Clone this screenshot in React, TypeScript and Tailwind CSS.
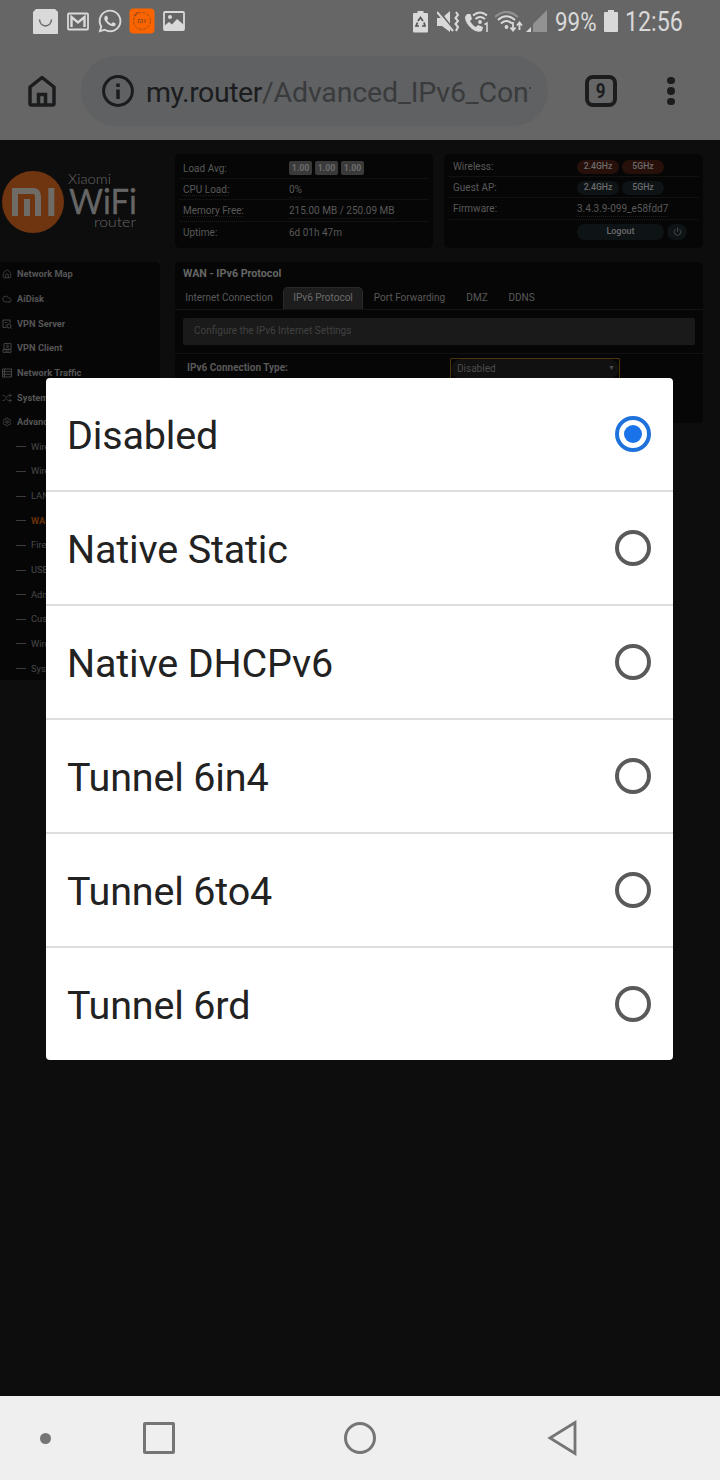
import { useState, type ReactNode } from "react";
import { Cloud, House, Power, Settings, Shuffle } from "lucide-react";
import { FaWhatsapp } from "react-icons/fa";

const connectionTypes = [
  "Disabled",
  "Native Static",
  "Native DHCPv6",
  "Tunnel 6in4",
  "Tunnel 6to4",
  "Tunnel 6rd",
];

type IconProps = { className?: string; strokeWidth?: number };

const ServerIcon = ({ className }: IconProps) => (
  <svg className={className} viewBox="0 0 10 10" fill="none" stroke="currentColor">
    <path d="M4.500 8.500H1V1H8V4" />
    <circle cx="7" cy="7" r="2" />
    <path d="M3 3.500H5.500M3 6H4M8.500 8.500L9.800 9.800" strokeWidth="0.800" />
  </svg>
);

const ClientIcon = ({ className }: IconProps) => (
  <svg className={className} viewBox="0 0 10 10" fill="none" stroke="currentColor">
    <path d="M2 6V0.600H9V6M1 6.500H9V9.300H1Z" />
    <circle cx="5.500" cy="3" r="1" strokeWidth="0.800" />
    <path d="M3.500 5.500Q5.500 3.500 7.500 5.500M3 8H7" strokeWidth="0.800" />
  </svg>
);

const TrafficIcon = ({ className }: IconProps) => (
  <svg className={className} viewBox="0 0 10 10" fill="none" stroke="currentColor">
    <path d="M0.500 1H9.500V9H0.500ZM0.500 3.700H9.500M0.500 6.300H9.500M2.500 1V9" />
  </svg>
);

const menuItems = [
  { label: "Network Map", Icon: House },
  { label: "AiDisk", Icon: Cloud },
  { label: "VPN Server", Icon: ServerIcon },
  { label: "VPN Client", Icon: ClientIcon },
  { label: "Network Traffic", Icon: TrafficIcon },
  { label: "System", Icon: Shuffle },
  { label: "Advanced", Icon: Settings },
];

const subMenuItems = [
  "Wireless",
  "Wireless",
  "LAN",
  "WAN",
  "Firewall",
  "USB",
  "Administration",
  "Customization",
  "Wireless",
  "System",
];

const tabs = [
  { label: "Internet Connection", width: "w-[108px]" },
  { label: "IPv6 Protocol", width: "w-[80px]" },
  { label: "Port Forwarding", width: "w-[93px]" },
  { label: "DMZ", width: "w-[42px]" },
  { label: "DDNS", width: "w-[47px]" },
];

const StatusBar = () => (
  <div className="flex h-11 items-center pl-[33px] text-[#d9d9d9]">
    <div className="flex w-[380px] items-center">
      {/* Store bag */}
      <svg width="25" height="26" viewBox="0 0 25 26">
        <path d="M3 0H22L25 3V24Q25 25 24 25H1Q0 25 0 24V3Z" fill="#d9d9d9" />
        <path
          d="M6.500 10.500C7 19 18 19 18.500 10.500"
          fill="none"
          stroke="#666"
          strokeWidth="1.500"
        />
      </svg>
      {/* Mail */}
      <svg className="mb-[2px] ml-[9px]" width="22" height="19" viewBox="0 0 22 19">
        <rect x="1" y="1.500" width="20" height="16" rx="1" fill="none" stroke="#d9d9d9" strokeWidth="1.800" />
        <path d="M4.500 15V5L11 10.500L17.500 5V15" fill="none" stroke="#d9d9d9" strokeWidth="2.400" />
      </svg>
      <FaWhatsapp className="mb-[2px] ml-2 size-[26px]" />
      {/* Mi store */}
      <svg className="mb-[2px] ml-[6px]" width="26" height="26" viewBox="0 0 26 26">
        <rect x="0.500" y="0.500" width="25" height="25" rx="4" fill="#fa6400" />
        <circle cx="13" cy="13" r="8.500" fill="none" stroke="#a34d19" strokeWidth="1" strokeDasharray="3 1.500" />
        <path d="M9.500 15V11.500H13.500V15M11.500 15V13M16 11V15" fill="none" stroke="#a34d19" strokeWidth="1.200" />
        <path d="M5 8L9 4" stroke="#a34d19" strokeWidth="1.500" />
      </svg>
      {/* Picture */}
      <svg className="mb-[2px] ml-2" width="22" height="20" viewBox="0 0 22 20">
        <rect x="1" y="1" width="20" height="18" rx="1" fill="none" stroke="#d9d9d9" strokeWidth="1.800" />
        <circle cx="7" cy="6" r="2" fill="#d9d9d9" />
        <path d="M1 15L6 11L9 13.500L14 8L21 14V19H1Z" fill="#d9d9d9" />
      </svg>
    </div>
    <div className="flex items-center">
      {/* Battery saver */}
      <svg width="15" height="22" viewBox="0 0 15 22" fill="#d9d9d9">
        <path d="M4.500 0H10.500V2H14Q15 2 15 3V20.500Q15 21.500 14 21.500H1Q0 21.500 0 20.500V3Q0 2 1 2H4.500Z" />
        <path d="M5 10L7.500 6.500L10 10M11 11.500L12 15H9M6 15H3L4.500 11.500" fill="none" stroke="#555" strokeWidth="1.700" />
      </svg>
      {/* Muted with vibration */}
      <svg className="ml-[9px]" width="23" height="22" viewBox="0 0 23 22">
        <path d="M0 7H5L13 0V21L5 15H0Z" fill="#d9d9d9" />
        <path d="M2 0L16 18" stroke="#666" strokeWidth="2" />
        <path d="M0 1L16 20" stroke="#d9d9d9" strokeWidth="2" />
        <path d="M19 1L21 4L18.500 7L21 10L18.500 13L21 16L19 20" fill="none" stroke="#d9d9d9" strokeWidth="2" />
      </svg>
      {/* Wi-Fi calling */}
      <svg className="ml-[5px]" width="25" height="22" viewBox="0 0 25 22">
        <path d="M2 3L5.500 3L7 8L5 10Q8 15 11 16L13 14L18 16L17 20Q12 22 7 18Q0 12 0 6Z" fill="#d9d9d9" />
        <path d="M8 4.500Q15 -1.500 22 4.500M10.500 8Q15 4 20 8" fill="none" stroke="#d9d9d9" strokeWidth="2" />
        <circle cx="15" cy="11" r="1.900" fill="#d9d9d9" />
        <path d="M19.500 13.500L22 12V21" fill="none" stroke="#d9d9d9" strokeWidth="1.500" />
      </svg>
      {/* Wi-Fi */}
      <svg className="ml-[5px]" width="29" height="22" viewBox="0 0 29 22" fill="none" strokeWidth="2.100">
        <path d="M0 6Q11 -4 23 6" stroke="#929292" />
        <path d="M3 9Q11 1.500 20 9M6 12.500Q11 7.500 17 12.500" stroke="#d9d9d9" />
        <circle cx="11.500" cy="16" r="1.900" fill="#d9d9d9" />
        <path d="M18 11V19M15.500 16.500L18 19.500L20.500 16.500M24.500 19V12M22 14.500L24.500 11.500L27 14.500" stroke="#d9d9d9" strokeWidth="1.800" />
      </svg>
      {/* Signal */}
      <svg className="mb-[2px] ml-[2px]" width="21" height="23" viewBox="0 0 21 23">
        <path d="M21 0V22H7V14Z" fill="#929292" />
        <path d="M0 22L5 17V22Z" fill="#d9d9d9" />
      </svg>
      <span className="ml-2 w-[42px] origin-left scale-x-[0.860] text-[26px] leading-none">99%</span>
      <svg className="mb-[2px] ml-[7px]" width="14" height="22" viewBox="0 0 14 22">
        <path d="M4 0H10V2H13Q14 2 14 3V21Q14 22 13 22H1Q0 22 0 21V3Q0 2 1 2H4Z" fill="#d9d9d9" />
      </svg>
      <span className="ml-[7px] origin-left scale-x-[0.860] text-[27px] leading-none">12:56</span>
    </div>
  </div>
);

const AddressBar = () => (
  <div className="flex h-24 items-center pb-[2px] pl-[27px] text-[#1b1c1e]">
    <svg width="30" height="32" viewBox="0 0 30 32" fill="none" stroke="#1b1c1e" strokeWidth="3.500">
      <path d="M3 12L15 2.500L27 12V28.500Q27 30 25.500 30H4.500Q3 30 3 28.500Z" strokeLinejoin="round" />
      <path d="M11.500 30V19.500H18.500V30" />
    </svg>
    <div className="ml-6 flex h-[70px] w-[467px] items-center rounded-full bg-[#5f6163] pl-[21px]">
      <svg width="32" height="32" viewBox="0 0 32 32" fill="none" stroke="#1b1c1e">
        <circle cx="16" cy="16" r="14.400" strokeWidth="3" />
        <path d="M16 8.500V12M16 14.500V24" strokeWidth="3.500" />
      </svg>
      <div className="ml-3 w-[385px] overflow-hidden pt-[3px] text-[28.500px] leading-10 tracking-[-0.450px] whitespace-nowrap">
        my.router<span className="tracking-[-0.150px] text-[#3a3b3c]">/Advanced_IPv6_Conf</span>
      </div>
    </div>
    <div className="ml-[37px] flex size-8 items-center justify-center rounded-[8px] border-4 border-[#1b1c1e] text-xl font-bold">
      <span className="scale-x-[0.850]">9</span>
    </div>
    <div className="ml-[50px] flex flex-col gap-[3px]">
      <span className="size-[7.500px] rounded-full bg-[#1b1c1e]" />
      <span className="size-[7.500px] rounded-full bg-[#1b1c1e]" />
      <span className="size-[7.500px] rounded-full bg-[#1b1c1e]" />
    </div>
  </div>
);

const RouterLogo = () => (
  <svg className="mt-[30px] block" width="140" height="66" viewBox="0 0 140 66">
    <circle cx="33" cy="32" r="31" fill="#6e3510" />
    <path d="M15 46V21H33Q38 21 38 27V46M27 46V29M51.300 18V46" fill="none" stroke="#6f6b66" strokeWidth="6" />
    <g fill="#666" fontFamily="Lato, sans-serif">
      <text x="68" y="14" fontSize="14" fontWeight="300" textLength="43" lengthAdjust="spacingAndGlyphs">Xiaomi</text>
      <text
        x="69"
        y="44"
        fontSize="34"
        textLength="68"
        lengthAdjust="spacingAndGlyphs"
        stroke="#666"
        strokeWidth="0.300"
        strokeLinejoin="round">
        WiFi
      </text>
      <text x="94" y="57" fontSize="14" fontWeight="300" textLength="42" lengthAdjust="spacingAndGlyphs">router</text>
    </g>
  </svg>
);

const dotted = "border-b border-dotted border-[#1e1e1e]";

const InfoRow = ({ label, children, last }: { label: ReactNode; children?: ReactNode; last?: boolean }) => (
  <div className={`flex h-[21.200px] items-center pl-1 ${last ? "" : "border-b border-[#111]"}`}>
    <span className="shrink-0 grow-0 basis-[106px]">{label}</span>
    {children}
  </div>
);

const Pill = ({ text, active }: { text: string; active?: boolean }) => (
  <span
    className={`mr-[3px] flex h-[14px] w-[42px] items-center justify-center rounded-full text-[8.700px] font-medium text-[#6c6c6c] ${
      active ? "bg-[#27100a]" : "bg-[#0e1315]"
    }`}>
    {text}
  </span>
);

const Sidebar = () => (
  <div className="h-[418px] w-40 rounded-r-[5px] bg-[#060606]">
    {menuItems.map(({ label, Icon }) => (
      <div key={label} className="flex h-[24.650px] items-center pl-[2px] text-[9.300px] font-bold text-[#555]">
        <Icon className="mr-[5px] size-[10px] text-[#444]" strokeWidth={2} />
        {label}
      </div>
    ))}
    {subMenuItems.map((label, index) => (
      <div
        key={index}
        className={`flex h-[24.650px] items-center pl-4 text-[9.300px] ${
          label === "WAN" ? "font-bold text-[#663009]" : "text-[#494949]"
        }`}>
        <span className="mr-[5px] h-px w-[10px] bg-[#3c3c3c]" />
        {label}
      </div>
    ))}
  </div>
);

const RouterPage = () => (
  <div className="h-[1256px] bg-[#0d0d0d] text-[10px] text-[#595959]">
    <div className="flex h-[122px]">
      <div className="w-[175px]">
        <RouterLogo />
      </div>
      <div className="mt-[14px] h-[94px] w-[258px] rounded-[5px] bg-[#060606] px-1 pt-1">
        <InfoRow label="Load Avg:">
          <div className="flex gap-[3px] text-[8.700px] font-bold text-[#6c6c6c]">
            {[0, 1, 2].map((i) => (
              <span key={i} className="flex h-[14px] w-[23px] items-center justify-center rounded-[2px] bg-[#3a3a3a]">
                1.00
              </span>
            ))}
          </div>
        </InfoRow>
        <InfoRow label={<span className={dotted}>CPU Load:</span>}>
          <span className={`mt-px ${dotted}`}>0%</span>
        </InfoRow>
        <InfoRow label={<span className={dotted}>Memory Free:</span>}>
          <span className={`mt-[2px] ${dotted}`}>215.00 MB / 250.09 MB</span>
        </InfoRow>
        <InfoRow label="Uptime:" last>6d 01h 47m</InfoRow>
      </div>
      <div className="mt-[14px] ml-[11px] h-[94px] w-[259px] rounded-[5px] bg-[#060606] pt-[2px] pr-1 pl-[5px]">
        <InfoRow label="Wireless:">
          <div className="ml-[18px] flex pt-[1px]">
            <Pill text="2.4GHz" active />
            <Pill text="5GHz" active />
          </div>
        </InfoRow>
        <InfoRow label="Guest AP:">
          <div className="ml-[18px] flex pt-[1px]">
            <Pill text="2.4GHz" />
            <Pill text="5GHz" />
          </div>
        </InfoRow>
        <InfoRow label="Firmware:">
          <span className={`mt-px ml-[18px] ${dotted}`}>3.4.3.9-099_e58fdd7</span>
        </InfoRow>
        <InfoRow label="" last>
          <span className="mt-[3px] ml-[18px] flex h-4 w-[87px] items-center justify-center rounded-full bg-[#0e1315] text-[9px] font-medium text-[#6c6c6c]">
            Logout
          </span>
          <span className="mt-[3px] ml-[3px] flex h-4 w-5 items-center justify-center rounded-full bg-[#0e1315]">
            <Power className="size-[9px]" />
          </span>
        </InfoRow>
      </div>
    </div>

    <div className="flex">
      <Sidebar />
      <div className="ml-[15px] h-[161px] w-[528px] rounded-[5px] bg-[#060606]">
        <h1 className="h-[25px] pt-1 pl-2 text-[10.700px] leading-4 font-bold text-[#666]">
          WAN - IPv6 Protocol
        </h1>
        <div className="flex h-[23px] border-b border-[#141414]">
          {tabs.map((tab) => (
            <div
              key={tab.label}
              className={`flex items-center justify-center pb-[2px] ${tab.width} ${
                tab.label === "IPv6 Protocol"
                  ? "rounded-t-[5px] border border-b-0 border-[#2a2a2a] bg-[#1d1d1d] text-[#6c6c6c]"
                  : ""
              }`}>
              {tab.label}
            </div>
          ))}
        </div>
        <div className="mt-2 ml-2 flex h-[27px] w-[512px] items-center rounded-[2px] bg-[#1a1a1a] pb-[2px] pl-[11px] text-[#414141]">
          Configure the IPv6 Internet Settings
        </div>
        <div className="mt-2 flex border-t border-[#111] pt-1">
          <span className="w-[275px] pt-[2px] pl-3 font-bold">IPv6 Connection Type:</span>
          <div className="h-[22px] w-[170px] rounded-[1px] border border-[#4d3510]">
            <div className="flex h-5 items-center justify-between rounded-full bg-[#111] pr-1 pb-[2px] pl-[6px] text-[#4c4c4c]">
              Disabled
              <span className="text-[7px]">▼</span>
            </div>
          </div>
        </div>
      </div>
    </div>
  </div>
);

const App = () => {
  const [selected, setSelected] = useState("Disabled");

  return (
    <div className="relative h-[1480px] w-[720px] overflow-hidden bg-[#666] font-[Roboto,sans-serif]">
      <StatusBar />
      <AddressBar />
      <RouterPage />

      {/* Navigation bar */}
      <div className="flex h-[84px] items-center bg-[#efefef] pl-10">
        <span className="size-[11px] rounded-full bg-[#757575]" />
        <span className="ml-[92px] size-8 rounded-[2px] border-3 border-[#757575]" />
        <span className="ml-[169px] size-8 rounded-full border-3 border-[#757575]" />
        <svg className="ml-[171px]" width="31" height="36" viewBox="0 0 31 36">
          <path d="M28 2.500V33.500L3 18Z" fill="none" stroke="#757575" strokeWidth="2.800" />
        </svg>
      </div>

      {/* Select dialog */}
      <div className="absolute top-[378px] left-[46px] h-[682px] w-[627px] overflow-hidden rounded-[4px] bg-white">
        {connectionTypes.map((type) => (
          <button
            key={type}
            onClick={() => setSelected(type)}
            className="flex h-[114px] w-full items-center justify-between border-b-2 border-[#dedede] pr-[22px] pl-[21px] text-[39.500px] tracking-[-0.170px] text-[#222] last:h-28 last:border-b-0">
            <span className="pt-[3px]">{type}</span>
            <span
              className={`flex size-9 items-center justify-center rounded-full border-4 ${
                selected === type ? "border-[#1f72dc]" : "border-[#5a5a5a]"
              }`}>
              {selected === type && <span className="size-[18px] rounded-full bg-[#1a73e8]" />}
            </span>
          </button>
        ))}
      </div>
    </div>
  );
};

export default App;
